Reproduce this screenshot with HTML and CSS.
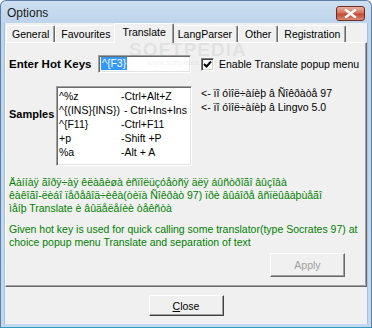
FILE: index.html
```html
<!DOCTYPE html>
<html lang="en">
<head>
    <meta charset="UTF-8">
    <title>Options</title>
    <link rel="stylesheet" href="styles.css">
</head>
<body>
    <div class="window">
        <div class="titlebar">
            <span class="title">Options</span>
            <span class="close-btn">
                <svg width="13" height="9" viewBox="0 0 13 9">
                    <path d="M2 1 L11 8 M11 1 L2 8" stroke="#fff" stroke-width="2.4" stroke-linecap="square"/>
                </svg>
            </span>
        </div>

        <div class="client">
            <div class="tabs">
                <div class="tab">General</div>
                <div class="tab">Favourites</div>
                <div class="tab active">Translate</div>
                <div class="tab">LangParser</div>
                <div class="tab other">Other</div>
                <div class="tab">Registration</div>
            </div>

            <div class="panel">
                <div class="hotkey-row">
                    <span class="label">Enter Hot Keys</span>
                    <div class="input"><span class="selected-text">^{F3}</span></div>
                    <div class="check">
                        <span class="box">
                            <svg width="9" height="9" viewBox="0 0 9 9">
                                <path d="M1 4 L3.5 6.5 L8 1.5" fill="none" stroke="#000" stroke-width="2"/>
                            </svg>
                        </span>
                        Enable Translate popup menu
                    </div>
                </div>

                <div class="samples-row">
                    <span class="label samples-label">Samples</span>
                    <div class="listbox">
                        <div class="item"><span class="key">^%z</span><span>-Ctrl+Alt+Z</span></div>
                        <div class="item"><span class="key">^{(INS}{INS})</span><span>&nbsp;- Ctrl+Ins+Ins</span></div>
                        <div class="item"><span class="key">^{F11}</span><span>-Ctrl+F11</span></div>
                        <div class="item"><span class="key">+p</span><span>-Shift +P</span></div>
                        <div class="item"><span class="key">%a</span><span>-Alt + A</span></div>
                    </div>
                    <div class="notes">
                        <div>&lt;- ïî óìîë÷àíèþ â Ñîêðàòå 97</div>
                        <div>&lt;- ïî óìîë÷àíèþ â Lingvo 5.0</div>
                    </div>
                </div>

                <p class="green first">Äàííàÿ ãîðÿ÷àÿ êëàâèøà èñïîëüçóåòñÿ äëÿ áûñòðîãî âûçîâà<br>êàêîãî-ëèáî ïåðåâîä÷èêà(òèïà Ñîêðàò 97) ïðè âûáîðå âñïëûâàþùåãî<br>ìåíþ Translate è âûäåëåíèè òåêñòà</p>
                <p class="green">Given hot key is used for quick calling some translator(type Socrates 97) at<br>choice popup menu Translate and separation of text</p>

                <div class="apply-row">
                    <button class="btn disabled">Apply</button>
                </div>
            </div>

            <div class="footer">
                <button class="btn close"><u>C</u>lose</button>
            </div>
        </div>

        <div class="watermark">SOFTPEDIA<span>www.softpedia.com</span></div>
    </div>
</body>
</html>
```

FILE: styles.css
```css
* {
    margin: 0;
    padding: 0;
    box-sizing: border-box;
}

body {
    width: 372px;
    height: 328px;
    overflow: hidden;
    font-family: 'Liberation Sans', Arial, sans-serif;
    font-size: 10.5px;
    color: #000;
    background: #fff;
}

.window {
    position: relative;
    width: 372px;
    height: 328px;
    display: flex;
    flex-direction: column;
    padding: 0 3px 3px 3px;
    border: 1px solid #5b7fa8;
    border-bottom-color: #2f9cc0;
    border-radius: 6px 6px 0 0;
    background: linear-gradient(#cddff1, #bed4eb 22px, #c3d8ee);
}

.titlebar {
    height: 22px;
    display: flex;
    align-items: center;
    justify-content: space-between;
    padding: 0 3px 0 3px;
}

.title {
    font-size: 12px;
    color: #1b1b1b;
    padding-top: 1px;
}

.close-btn {
    width: 29px;
    height: 15px;
    margin-top: 2px;
    display: flex;
    align-items: center;
    justify-content: center;
    border: 1px solid #6e2b1f;
    border-radius: 3px;
    background: linear-gradient(#eab1a3, #d5735e 45%, #c24a33 55%, #d88a76);
}

.client {
    flex: 1;
    display: flex;
    flex-direction: column;
    background: #f0f0f0;
    border-left: 1px solid #a9c1dc;
    border-right: 1px solid #a9c1dc;
}

/* tabs */

.tabs {
    display: flex;
    align-items: flex-end;
    height: 19px;
    padding-left: 1px;
    position: relative;
    z-index: 1;
}

.tab {
    height: 17px;
    padding: 1px 5px 0 5px;
    line-height: 14px;
    border: 1px solid;
    border-bottom: none;
    border-color: #fff #696969 transparent #fff;
    border-radius: 2px 2px 0 0;
    box-shadow: inset -1px 0 #a0a0a0;
    background: #f0f0f0;
}

.tab.other {
    padding: 1px 6px 0 6px;
}

.tab.active {
    height: 20px;
    margin: 0 -2px -1px -2px;
    padding: 1px 7px 0 7px;
    z-index: 2;
}

/* main panel */

.panel {
    height: 245px;
    display: flex;
    flex-direction: column;
    padding: 0 0 0 3px;
    border: 1px solid;
    border-color: #fff #696969 #696969 #fff;
    box-shadow: inset -1px -1px #a0a0a0;
}

.label {
    font-weight: bold;
    font-size: 11.5px;
}

.hotkey-row {
    display: flex;
    align-items: center;
    height: 18px;
    margin-top: 12px;
}

.hotkey-row .label {
    width: 89px;
}

.input {
    width: 93px;
    height: 18px;
    padding: 1px 0 0 1px;
    background: #fff;
    border: 1px solid;
    border-color: #a0a0a0 #fff #fff #a0a0a0;
    box-shadow: inset 1px 1px #696969, inset -1px -1px #e3e3e3;
}

.selected-text {
    display: inline-block;
    height: 13px;
    line-height: 13px;
    padding: 0 1px;
    margin-left: 1px;
    background: #3399ff;
    color: #fff;
}

.check {
    display: flex;
    align-items: center;
    margin-left: 10px;
    gap: 5px;
}

.box {
    width: 13px;
    height: 13px;
    display: flex;
    align-items: center;
    justify-content: center;
    background: #fff;
    border: 1px solid;
    border-color: #808080 #fff #fff #808080;
    box-shadow: inset 1px 1px #404040, inset -1px -1px #d4d0c8;
}

.samples-row {
    display: flex;
    align-items: flex-start;
    margin-top: 13px;
}

.samples-label {
    width: 47px;
    font-size: 11px;
    margin-top: 22px;
}

.listbox {
    width: 136px;
    height: 80px;
    padding: 2px 0 0 2px;
    background: #fff;
    border: 1px solid;
    border-color: #a0a0a0 #fff #fff #a0a0a0;
    box-shadow: inset 1px 1px #696969, inset -1px -1px #e3e3e3;
    white-space: nowrap;
    overflow: hidden;
}

.item {
    height: 14px;
    line-height: 14px;
}

.key {
    display: inline-block;
    min-width: 62px;
}

.notes {
    margin-left: 9px;
    line-height: 14px;
}

.green {
    color: #008000;
    line-height: 13px;
    white-space: nowrap;
}

.green.first {
    margin-top: 10px;
    margin-bottom: 8px;
}

.apply-row {
    display: flex;
    justify-content: flex-end;
    padding-right: 21px;
    margin-top: 4px;
}

.btn {
    width: 75px;
    height: 24px;
    font-family: 'Liberation Sans', Arial, sans-serif;
    font-size: 10.5px;
    color: #000;
    background: #f0f0f0;
    border: 1px solid;
    border-color: #fff #696969 #696969 #fff;
    box-shadow: inset -1px -1px #a0a0a0;
}

.btn.disabled {
    color: #a0a0a0;
}

.footer {
    flex: 1;
    display: flex;
    justify-content: center;
    padding-top: 8px;
}

.btn.close {
    height: 21px;
    border-color: #fff #404040 #404040 #fff;
}

.watermark {
    position: absolute;
    left: 128px;
    top: 41px;
    font-size: 19px;
    font-weight: bold;
    letter-spacing: 1px;
    color: rgba(150, 150, 150, 0.16);
    line-height: 16px;
    pointer-events: none;
}

.watermark span {
    display: block;
    font-size: 8px;
    font-weight: normal;
    letter-spacing: 0;
    line-height: 10px;
    padding-left: 18px;
}
```
